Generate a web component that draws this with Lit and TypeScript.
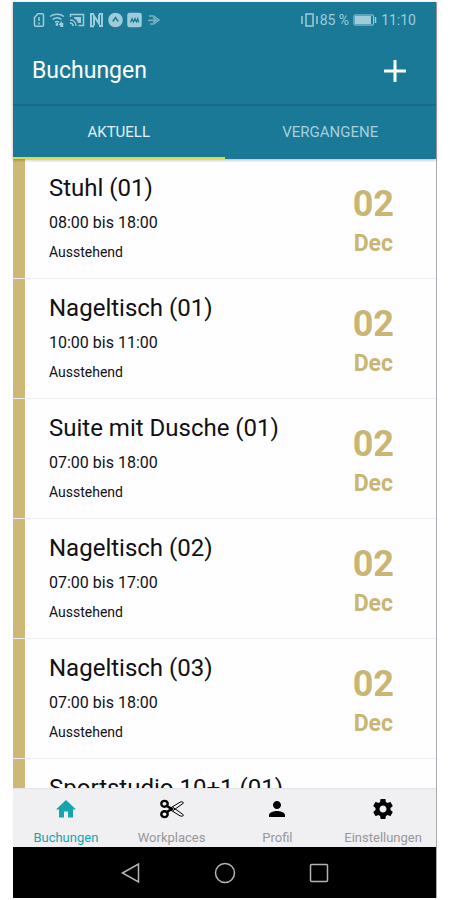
import { LitElement, html, css, svg, nothing } from "lit";
import { customElement, property } from "lit/decorators.js";
import { classMap } from "lit/directives/class-map.js";

interface Booking {
  name: string;
  time?: string;
  status?: string;
  day?: string;
  month?: string;
}

const bookings: Booking[] = [
  { name: "Stuhl (01)", time: "08:00 bis 18:00", status: "Ausstehend", day: "02", month: "Dec" },
  { name: "Nageltisch (01)", time: "10:00 bis 11:00", status: "Ausstehend", day: "02", month: "Dec" },
  { name: "Suite mit Dusche (01)", time: "07:00 bis 18:00", status: "Ausstehend", day: "02", month: "Dec" },
  { name: "Nageltisch (02)", time: "07:00 bis 17:00", status: "Ausstehend", day: "02", month: "Dec" },
  { name: "Nageltisch (03)", time: "07:00 bis 18:00", status: "Ausstehend", day: "02", month: "Dec" },
  { name: "Sportstudio 10+1 (01)" },
];

const home = svg`<path d="M10 20.500v-6h4v6h5v-8h3L12 3 2 12.500h3v8z"/>`;
const scissors = svg`
  <g fill="none" stroke="currentColor">
    <ellipse cx="4.500" cy="6.800" rx="3.200" ry="2.900" stroke-width="2.400"/>
    <ellipse cx="4.500" cy="17.200" rx="3.200" ry="2.900" stroke-width="2.400"/>
    <path d="M7 9 11.500 12 7 15" stroke-width="2.600"/>
    <path d="M10.500 11 20 5.200c1.600-.9 3.200-.3 3.500.9L13 13.600z" stroke-width="1"/>
    <path d="M10.500 13 20 18.800c1.600.9 3.200.3 3.500-.9L13 10.400z" stroke-width="1"/>
  </g>`;
const person = svg`<path d="M12 12c2.200 0 4-1.800 4-4s-1.800-4-4-4-4 1.800-4 4 1.800 4 4 4zm0 2c-2.700 0-8 1.300-8 4v2h16v-2c0-2.700-5.300-4-8-4z"/>`;
const gear = svg`<path d="M19.430 12.980c.04-.32.07-.64.07-.98s-.03-.66-.07-.98l2.110-1.650c.19-.15.24-.42.12-.64l-2-3.460c-.12-.22-.39-.3-.61-.22l-2.490 1c-.52-.4-1.080-.73-1.690-.98l-.38-2.650C14.460 2.180 14.250 2 14 2h-4c-.25 0-.46.18-.49.42l-.38 2.650c-.61.25-1.170.59-1.690.98l-2.490-1c-.23-.09-.49 0-.61.22l-2 3.460c-.13.22-.07.49.12.64l2.110 1.650c-.04.32-.07.65-.07.98s.03.66.07.98l-2.110 1.650c-.19.15-.24.42-.12.64l2 3.460c.12.22.39.3.61.22l2.490-1c.52.4 1.080.73 1.690.98l.38 2.650c.03.24.24.42.49.42h4c.25 0 .46-.18.49-.42l.38-2.650c.61-.25 1.170-.59 1.690-.98l2.490 1c.23.09.49 0 .61-.22l2-3.460c.12-.22.07-.49-.12-.64l-2.110-1.650zM12 15.500c-1.930 0-3.500-1.570-3.500-3.500s1.570-3.500 3.500-3.500 3.500 1.570 3.500 3.500-1.570 3.500-3.500 3.500z"/>`;

const navItems = [
  { label: "Buchungen", icon: home, active: true },
  { label: "Workplaces", icon: scissors, active: false },
  { label: "Profil", icon: person, active: false },
  { label: "Einstellungen", icon: gear, active: false },
];

@customElement("status-bar")
class StatusBar extends LitElement {
  static styles = css`
    :host {
      display: flex;
      align-items: center;
      justify-content: space-between;
      height: 36px;
      padding: 0 20px;
      color: #9fccd8;
      font-size: 14px;
      line-height: 16px;
    }
    .group {
      display: flex;
      align-items: center;
      gap: 4px;
    }
    .level {
      display: flex;
      align-items: center;
      gap: 2px;
    }
    svg {
      display: block;
      fill: none;
      stroke: currentColor;
      stroke-width: 1.5;
    }
  `;

  render() {
    return html`
      <div class="group">
        <svg width="12" height="16" viewBox="0 0 12 16">
          <path d="M1.500 5.500 5 1.700h4.200c.8 0 1.300.5 1.300 1.300v10c0 .8-.5 1.300-1.300 1.300H2.800c-.8 0-1.300-.5-1.300-1.300zM6 5v4M6 10.500v2" />
        </svg>
        <svg width="16" height="16" viewBox="0 0 16 16">
          <path d="M1 4.500c4-3 10-3 14 0M3.500 7.500c3-2.200 6.500-2.200 9 0M6 10.300c1.500-1 3-1 4 0M10.500 13l1.500-2v4M13.500 15v-4" />
          <circle cx="8" cy="12.500" r=".7" />
        </svg>
        <svg width="16" height="16" viewBox="0 0 16 16">
          <path d="M1.500 5V2.500h13v11H9.500M1 8c3.500 0 6 2.500 6 6M1 11c1.800 0 3 1.200 3 3" />
          <path d="M5 5h7v6H9C8.500 8.500 7 7 5 6.500z" fill="currentColor" stroke="none" />
        </svg>
        <svg width="15" height="16" viewBox="0 0 15 16">
          <path d="M5 2H2v12.200h3M10 14h3V2h-3" stroke-width="2" />
          <path d="M5 13.500V4l5 7.500V2.500" stroke-width="2" />
        </svg>
        <svg width="15" height="16" viewBox="0 0 15 16">
          <circle cx="7.500" cy="8" r="5.300" stroke-width="4" fill="currentColor" />
          <path d="M4.800 9.500 7.500 5.500l2.700 4" stroke="#1b7998" />
        </svg>
        <svg width="15" height="16" viewBox="0 0 15 16">
          <rect x="1" y="1.500" width="13" height="13" rx="1.500" fill="currentColor" />
          <path d="M3.500 10.500 5 6.500l1.500 3.500L8 6.500l1.500 3.500 1.300-3.500.9 4" stroke="#1b7998" stroke-width="1.200" />
        </svg>
        <svg width="15" height="16" viewBox="0 0 15 16" opacity=".7">
          <path d="M3 4h4.500L13 8l-5.500 4H4M7 5.500 10 8l-8 .500M7 10.500 10 8" />
        </svg>
      </div>
      <div class="group">
        <div class="level">
          <svg width="17" height="16" viewBox="0 0 17 16">
            <path d="M1 4v8M16 4v8M5 2h7v12H5z" />
          </svg>
          <span>85 %</span>
        </div>
        <svg width="24" height="16" viewBox="0 0 24 16">
          <rect x="1" y="3" width="19.500" height="10" rx="1" stroke-width="1" />
          <path d="M2 4h16v8H2z" fill="currentColor" stroke="none" />
          <path d="M22.500 5v6" />
        </svg>
        <span>11:10</span>
      </div>
    `;
  }
}

@customElement("booking-row")
class BookingRow extends LitElement {
  @property({ attribute: false }) booking!: Booking;

  static styles = css`
    :host {
      display: flex;
      flex: none;
      box-sizing: border-box;
      height: 120px;
      border-bottom: 1px solid #eeeef2;
    }
    .stripe {
      flex: none;
      width: 12px;
      background: #ceb877;
    }
    .details {
      flex: 1;
      min-width: 0;
      display: flex;
      flex-direction: column;
      gap: 10px;
      padding: 14px 0 0 24px;
    }
    .name {
      margin: 0;
      font-size: 24px;
      line-height: 30px;
      font-weight: 400;
      white-space: nowrap;
    }
    .time {
      font-size: 16px;
      line-height: 20px;
    }
    .status {
      font-size: 14px;
      line-height: 18px;
    }
    .date {
      display: flex;
      flex-direction: column;
      align-items: center;
      padding: 24px 42px 0 0;
      color: #c9b674;
      font-weight: 700;
    }
    .day {
      font-size: 36px;
      line-height: 42px;
    }
    .month {
      font-size: 23px;
      line-height: 38px;
    }
  `;

  render() {
    const b = this.booking;
    return html`
      <div class="stripe"></div>
      <div class="details">
        <h2 class="name">${b.name}</h2>
        ${b.time ? html`<div class="time">${b.time}</div>` : nothing}
        ${b.status ? html`<div class="status">${b.status}</div>` : nothing}
      </div>
      ${b.day
        ? html`<div class="date">
            <span class="day">${b.day}</span>
            <span class="month">${b.month}</span>
          </div>`
        : nothing}
    `;
  }
}

@customElement("app-root")
class AppRoot extends LitElement {
  static styles = css`
    :host {
      display: flex;
      box-sizing: border-box;
      height: 100vh;
      padding: 2px 14px 2px 13px;
      background: #fff;
      font-family: Roboto, "Liberation Sans", sans-serif;
      color: #111;
    }
    button {
      border: 0;
      margin: 0;
      padding: 0;
      background: none;
      font: inherit;
      color: inherit;
    }
    svg {
      display: block;
    }
    .screen {
      flex: 1;
      min-width: 0;
      display: flex;
      flex-direction: column;
      background: #fefdff;
      box-shadow: 1px 0 0 #a9a9ad;
    }
    .header {
      flex: none;
      position: relative;
      background: #1b7998;
      box-shadow: 0 1px 3px rgba(0, 0, 0, 0.3);
    }
    .bar {
      display: flex;
      align-items: center;
      justify-content: space-between;
      height: 66px;
      padding: 0 30px 0 19px;
      border-bottom: 2px solid #19698a;
      color: #fff;
    }
    .title {
      margin: 0;
      font-size: 23px;
      line-height: 30px;
      font-weight: 400;
    }
    .tabs {
      display: flex;
    }
    .tab {
      flex: 1;
      height: 53px;
      border-bottom: 2px solid transparent;
      color: #a6cfda;
      font-size: 15px;
      line-height: 20px;
    }
    .tab.active {
      border-color: #d9dc45;
      color: #e2f1f5;
    }
    .list {
      flex: 1;
      min-height: 0;
      overflow: hidden;
      display: flex;
      flex-direction: column;
    }
    .nav {
      flex: none;
      display: flex;
      height: 58px;
      background: #f0eff1;
      box-shadow: 0 -1px 0 #e3e3e6;
      position: relative;
    }
    .item {
      flex: 1 1 0;
      min-width: 0;
      display: flex;
      flex-direction: column;
      align-items: center;
      gap: 9px;
      padding-top: 8px;
      color: #98989c;
      font-size: 13px;
      line-height: 16px;
    }
    .item svg {
      fill: currentColor;
      color: #000;
    }
    .item.active,
    .item.active svg {
      color: #17a5ad;
    }
    .system {
      flex: none;
      display: flex;
      align-items: center;
      justify-content: center;
      gap: 70px;
      height: 51px;
      background: #000;
      color: #b4b4b4;
    }
    .system svg {
      fill: none;
      stroke: currentColor;
      stroke-width: 1.5;
    }
  `;

  render() {
    return html`
      <div class="screen">
        <header class="header">
          <status-bar></status-bar>
          <div class="bar">
            <h1 class="title">Buchungen</h1>
            <button class="add" aria-label="Buchung hinzufügen">
              <svg width="22" height="22" viewBox="0 0 22 22" fill="none" stroke="currentColor" stroke-width="3">
                <path d="M11 0v22M0 11h22" />
              </svg>
            </button>
          </div>
          <div class="tabs" role="tablist">
            <button class="tab active" role="tab" aria-selected="true">AKTUELL</button>
            <button class="tab" role="tab" aria-selected="false">VERGANGENE</button>
          </div>
        </header>
        <main class="list">
          ${bookings.map((b) => html`<booking-row .booking=${b}></booking-row>`)}
        </main>
        <nav class="nav">
          ${navItems.map(
            (item) => html`
              <button class=${classMap({ item: true, active: item.active })}>
                <svg width="24" height="24" viewBox="0 0 24 24">${item.icon}</svg>
                <span>${item.label}</span>
              </button>
            `
          )}
        </nav>
        <div class="system">
          <button aria-label="Zurück">
            <svg width="24" height="24" viewBox="0 0 24 24"><path d="M3.500 12 19.500 3v18z" /></svg>
          </button>
          <button aria-label="Startbildschirm">
            <svg width="24" height="24" viewBox="0 0 24 24"><circle cx="12" cy="12" r="9.500" /></svg>
          </button>
          <button aria-label="Letzte Apps">
            <svg width="24" height="24" viewBox="0 0 24 24"><rect x="3.500" y="3.500" width="17" height="17" rx="1" /></svg>
          </button>
        </div>
      </div>
    `;
  }
}
